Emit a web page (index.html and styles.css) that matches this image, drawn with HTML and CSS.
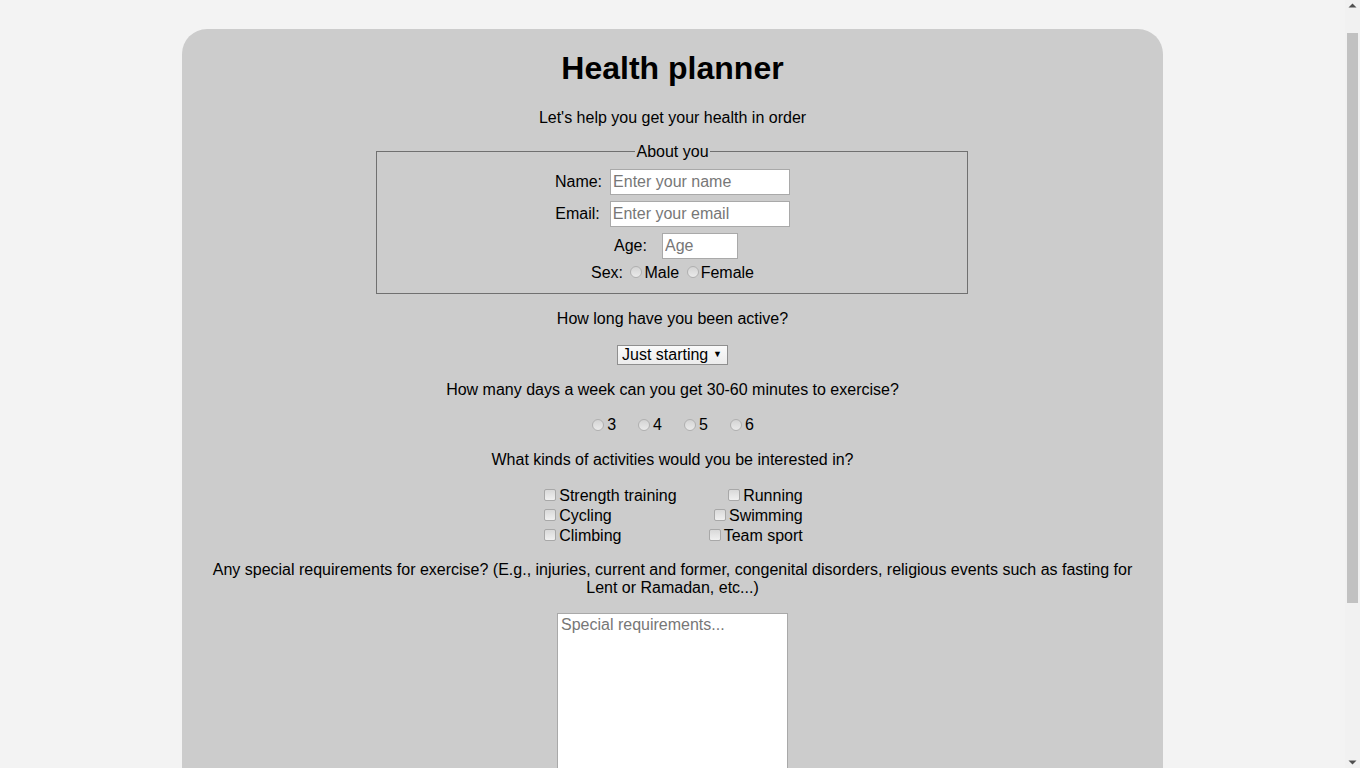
FILE: index.html
```html
<!DOCTYPE html>
<html lang="en">
<head>
<meta charset="utf-8">
<title>Health planner</title>
<link rel="stylesheet" href="styles.css">
</head>
<body>
<main class="card">
  <h1 class="title">Health planner</h1>
  <p class="text">Let's help you get your health in order</p>
  <form class="form">
    <fieldset class="about">
      <legend class="legend">About you</legend>
      <div class="row gap-name"><label class="lbl" for="name">Name:</label><input class="field field-wide" id="name" type="text" placeholder="Enter your name"></div>
      <div class="row gap-email"><label class="lbl" for="email">Email:</label><input class="field field-wide" id="email" type="email" placeholder="Enter your email"></div>
      <div class="row row-age gap-age"><label class="lbl" for="age">Age:</label><input class="field field-age" id="age" type="text" placeholder="Age"></div>
      <div class="row-sex">Sex: <input class="radio radio-sex" type="radio" name="sex" id="male"><label for="male">Male</label> <input class="radio radio-sex" type="radio" name="sex" id="female"><label for="female">Female</label></div>
    </fieldset>

    <p class="text">How long have you been active?</p>
    <div class="select-row">
      <span class="select-wrap">
        <select class="select">
          <option>Just starting</option>
          <option>Less than a year</option>
          <option>1-3 years</option>
          <option>More than 3 years</option>
        </select>
        <span class="select-arrow">&#9660;</span>
      </span>
    </div>

    <p class="text">How many days a week can you get 30-60 minutes to exercise?</p>
    <div class="days">
      <label class="day"><input class="radio" type="radio" name="days">3</label>
      <label class="day"><input class="radio" type="radio" name="days">4</label>
      <label class="day"><input class="radio" type="radio" name="days">5</label>
      <label class="day"><input class="radio" type="radio" name="days">6</label>
    </div>

    <p class="text">What kinds of activities would you be interested in?</p>
    <div class="activities">
      <label class="act act-left"><input class="check" type="checkbox">Strength training</label>
      <label class="act act-right"><input class="check" type="checkbox">Running</label>
      <label class="act act-left"><input class="check" type="checkbox">Cycling</label>
      <label class="act act-right"><input class="check" type="checkbox">Swimming</label>
      <label class="act act-left"><input class="check" type="checkbox">Climbing</label>
      <label class="act act-right"><input class="check" type="checkbox">Team sport</label>
    </div>

    <p class="text text-tight">Any special requirements for exercise? (E.g., injuries, current and former, congenital disorders, religious events such as fasting for Lent or Ramadan, etc...)</p>
    <textarea class="notes" placeholder="Special requirements..."></textarea>
  </form>
</main>

<div class="scrollbar" aria-hidden="true">
  <div class="sb-btn">
    <svg width="15" height="15" viewBox="0 0 15 15"><path d="M3.5 7.5 L7.5 3.5 L11.5 7.5 Z" fill="#505050"/></svg>
  </div>
  <div class="sb-thumb"></div>
  <div class="sb-spacer"></div>
  <div class="sb-btn">
    <svg width="15" height="15" viewBox="0 0 15 15"><path d="M3.5 7.5 L7.5 11.5 L11.5 7.5 Z" fill="#505050"/></svg>
  </div>
</div>
</body>
</html>
```

FILE: styles.css
```css
html, body {
  margin: 0;
  padding: 0;
}

html {
  overflow-x: hidden;
}

body {
  background: #f3f3f3;
  font-family: "Liberation Sans", Arial, sans-serif;
  font-size: 16px;
  color: #000;
  padding-right: 15px;
}

.card {
  display: flow-root;
  width: 981px;
  box-sizing: border-box;
  margin: 29px auto 29px;
  padding: 0 20px 110px;
  background: #cccccc;
  border-radius: 25px;
  text-align: center;
}

.title {
  font-size: 32px;
  font-weight: bold;
  margin: 21.44px 0;
  line-height: normal;
}

.text {
  margin: 16px 0;
  line-height: normal;
}

.text-tight {
  margin-top: 15px;
}

.form {
  margin: 0;
}

.about {
  width: 592px;
  box-sizing: border-box;
  margin: 0 auto 0 calc(50% - 297px);
  padding: 8px 11px 11px 13px;
  border: 1px solid #707070;
}

.legend {
  margin: 0 auto;
  padding: 0 1px;
  line-height: normal;
}

.row {
  display: flex;
  justify-content: center;
  align-items: center;
  height: 26px;
  margin-bottom: 6px;
}

.row-age {
  margin-bottom: 5px;
}

.gap-name { gap: 8px; }
.gap-email { gap: 10px; }
.gap-age { gap: 15px; padding-left: 7px; }

.field {
  box-sizing: border-box;
  height: 26px;
  border: 1px solid #a9a9a9;
  background: #fff;
  padding: 1px 2px;
  font-family: "Liberation Sans", Arial, sans-serif;
  font-size: 16px;
  color: #000;
  outline: none;
}

.field::placeholder,
.notes::placeholder {
  color: #777;
}

.field-wide { width: 180px; }
.field-age { width: 76px; }

.row-sex {
  line-height: normal;
  margin: 0;
}

.radio {
  appearance: none;
  -webkit-appearance: none;
  width: 12px;
  height: 12px;
  margin: 0 3px 0 0;
  border: 1px solid #b0b0b0;
  border-radius: 50%;
  background: linear-gradient(#d4d4d4, #eaeaea);
  box-sizing: border-box;
  vertical-align: 0;
}

.radio-sex {
  margin: 0 2px 0 3px;
}

.select-row {
  margin: 16px 0;
  height: 21px;
  line-height: 20px;
}

.select-wrap {
  position: relative;
  display: inline-block;
  vertical-align: top;
  margin-top: 1px;
}

.select {
  appearance: none;
  -webkit-appearance: none;
  box-sizing: border-box;
  width: 111px;
  height: 20px;
  margin: 0;
  padding: 0 0 0 4px;
  border: 1px solid #8f8f8f;
  border-radius: 0;
  background: linear-gradient(#fafafa, #ececec);
  font-family: "Liberation Sans", Arial, sans-serif;
  font-size: 16px;
  line-height: 18px;
  color: #000;
}

.select-arrow {
  position: absolute;
  right: 6px;
  top: 0;
  font-size: 9px;
  line-height: 19px;
  pointer-events: none;
}

.days {
  display: flex;
  justify-content: center;
  gap: 22px;
  height: 20px;
  line-height: 20px;
  padding-left: 1px;
}

.day {
  display: flex;
  align-items: center;
}

.activities {
  display: grid;
  grid-template-columns: auto auto;
  column-gap: 31px;
  width: fit-content;
  margin: 17px auto 0;
  padding-left: 1px;
}

.act {
  display: flex;
  align-items: center;
  height: 20px;
  line-height: 20px;
}

.act-left { justify-content: flex-start; }
.act-right { justify-content: flex-end; }

.check {
  appearance: none;
  -webkit-appearance: none;
  box-sizing: border-box;
  width: 12px;
  height: 12px;
  margin: -2px 3px 0 1px;
  border: 1px solid #a8a8a8;
  border-radius: 2px;
  background: linear-gradient(#d9d9d9, #f0f0f0);
}

.notes {
  display: block;
  box-sizing: border-box;
  width: 231px;
  height: 250px;
  margin: 0 auto;
  padding: 2px 3px;
  border: 1px solid #a9a9a9;
  background: #fff;
  font-family: "Liberation Sans", Arial, sans-serif;
  font-size: 16px;
  resize: vertical;
  outline: none;
}

.scrollbar {
  position: fixed;
  top: 0;
  right: 0;
  width: 15px;
  height: 100vh;
  background: #f1f1f1;
  display: flex;
  flex-direction: column;
}

.sb-btn {
  height: 15px;
  flex: none;
}

.sb-btn svg {
  display: block;
}

.sb-thumb {
  flex: none;
  height: 570px;
  margin: 18px 2px 0;
  background: #c1c1c1;
}

.sb-spacer {
  flex: 1;
}
```
